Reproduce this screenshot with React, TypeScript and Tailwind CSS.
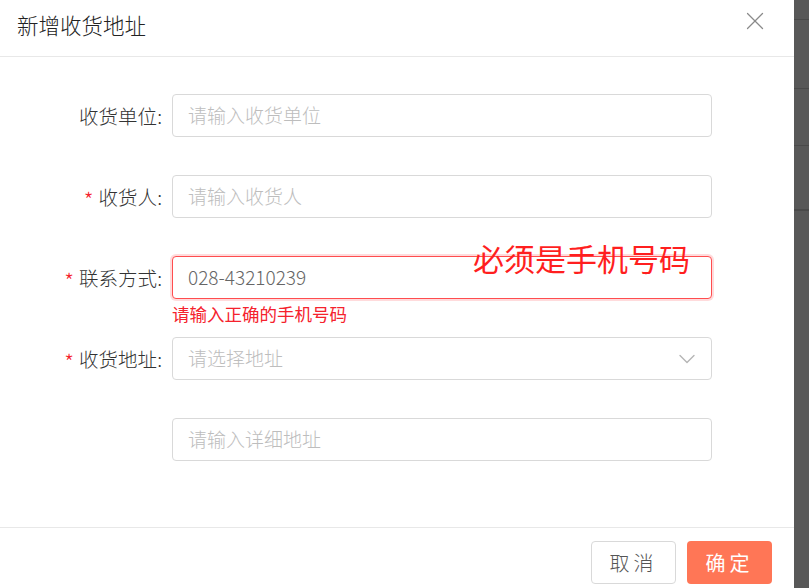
import { ChevronDown, X } from "lucide-react";

const font = { fontFamily: '"Noto Sans CJK SC", "Noto Sans", sans-serif' };

type RowProps = {
  label?: string;
  required?: boolean;
  children: React.ReactNode;
};

function FormRow({ label, required, children }: RowProps) {
  return (
    <div className="flex h-[81px] items-start">
      <div className="flex h-[43px] w-[172px] items-center justify-end pr-[10px] text-[19.5px] font-light text-[#333]">
        {required && <span className="mr-[5px] mt-[5px] text-[22px] font-light text-[#f5222d]">*</span>}
        {label && <span>{label}:</span>}
      </div>
      <div className="w-[540px]">{children}</div>
    </div>
  );
}

function TextInput({ placeholder }: { placeholder: string }) {
  return (
    <div className="flex h-[43px] items-center rounded-[4px] border border-[#d9d9d9] bg-white px-[15px] text-[19px] font-light text-[#bdbdbd]">
      {placeholder}
    </div>
  );
}

export default function App() {
  return (
    <div className="flex h-[588px] w-[809px] overflow-hidden bg-white" style={font}>
      <div className="relative flex w-[794px] flex-col bg-white">
        <div className="flex h-[57px] shrink-0 items-center justify-between border-b border-[#e8e8e8] pl-[17px] pr-[24px]">
          <h1 className="-mt-[6px] text-[21.5px] font-light text-[#222]">新增收货地址</h1>
          <X className="-mt-[15px] h-[30px] w-[30px] text-[#8a8a8a]" strokeWidth={1} />
        </div>

        <div className="flex-1 pt-[37px]">
          <FormRow label="收货单位">
            <TextInput placeholder="请输入收货单位" />
          </FormRow>
          <FormRow label="收货人" required>
            <TextInput placeholder="请输入收货人" />
          </FormRow>
          <FormRow label="联系方式" required>
            <div className="flex h-[43px] items-center rounded-[4px] border border-[#ff4d4f] bg-white px-[15px] text-[19px] font-light text-[#666] shadow-[0_0_0_2px_rgba(255,77,79,0.2)]">
              028-43210239
            </div>
            <div className="mt-[4px] text-[17.5px] leading-[22px] text-[#f5222d]">请输入正确的手机号码</div>
          </FormRow>
          <FormRow label="收货地址" required>
            <div className="flex h-[43px] items-center justify-between rounded-[4px] border border-[#d9d9d9] bg-white pl-[15px] pr-[10px] text-[19px] font-light text-[#bdbdbd]">
              <span>请选择地址</span>
              <ChevronDown className="h-[28px] w-[28px] text-[#b5b5b5]" strokeWidth={1.2} />
            </div>
          </FormRow>
          <FormRow>
            <TextInput placeholder="请输入详细地址" />
          </FormRow>
        </div>

        <div className="flex h-[61px] shrink-0 items-start justify-end gap-[11px] border-t border-[#e8e8e8] pr-[22px] pt-[13px]">
          <button className="h-[43px] w-[85px] rounded-[4px] border border-[#d9d9d9] bg-white text-[20px] font-light tracking-[4px] text-[#555]">
            取消
          </button>
          <button className="h-[43px] w-[85px] rounded-[4px] bg-[#ff7656] text-[20px] tracking-[4px] text-white">
            确定
          </button>
        </div>

        <div className="absolute left-[473px] top-[238px] text-[31px] leading-[40px] text-[#ff1f1f]">
          必须是手机号码
        </div>
      </div>

      <div className="flex flex-1 flex-col bg-[#585858]">
        <div className="h-[20px] border-b border-[#4a4a4a]" />
        <div className="h-[69px] border-b border-[#4a4a4a]" />
        <div className="h-[57px] border-b border-[#4a4a4a]" />
        <div className="h-[65px] border-b-2 border-[#4a4a4a]" />
      </div>
    </div>
  );
}
